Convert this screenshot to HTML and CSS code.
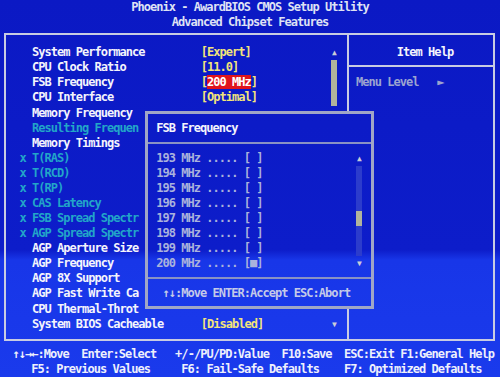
FILE: index.html
```html
<!DOCTYPE html>
<html>
<head>
  <meta charset="utf-8">
  <title>Advanced Chipset Features</title>
  <link rel="stylesheet" href="styles.css">
</head>
<body>
  <div class="title">
    <div>Phoenix - AwardBIOS CMOS Setup Utility</div>
    <div>Advanced Chipset Features</div>
  </div>

  <div class="frame">
    <div class="menu">
      <ul class="items">
        <li><span></span><span>System Performance</span><span class="value">[Expert]</span></li>
        <li><span></span><span>CPU Clock Ratio</span><span class="value">[11.0]</span></li>
        <li><span></span><span>FSB Frequency</span><span class="value">[<span class="sel">200 MHz</span>]</span></li>
        <li><span></span><span>CPU Interface</span><span class="value">[Optimal]</span></li>
        <li><span></span><span>Memory Frequency</span><span></span></li>
        <li class="off"><span></span><span>Resulting Frequen</span><span></span></li>
        <li><span></span><span>Memory Timings</span><span></span></li>
        <li class="off"><span>x</span><span>T(RAS)</span><span></span></li>
        <li class="off"><span>x</span><span>T(RCD)</span><span></span></li>
        <li class="off"><span>x</span><span>T(RP)</span><span></span></li>
        <li class="off"><span>x</span><span>CAS Latency</span><span></span></li>
        <li class="off"><span>x</span><span>FSB Spread Spectr</span><span></span></li>
        <li class="off"><span>x</span><span>AGP Spread Spectr</span><span></span></li>
        <li><span></span><span>AGP Aperture Size</span><span></span></li>
        <li><span></span><span>AGP Frequency</span><span></span></li>
        <li><span></span><span>AGP 8X Support</span><span></span></li>
        <li><span></span><span>AGP Fast Write Ca</span><span></span></li>
        <li><span></span><span>CPU Thermal-Throt</span><span></span></li>
        <li><span></span><span>System BIOS Cacheable</span><span class="value">[Disabled]</span></li>
      </ul>
      <div class="scroll">
        <span class="arrow">▲</span>
        <span class="thumb"></span>
        <span class="track"></span>
        <span class="arrow">▼</span>
      </div>
    </div>
    <div class="help">
      <div class="help-title">Item Help</div>
      <div class="rule"></div>
      <div class="help-row">Menu Level   ►</div>
    </div>
  </div>

  <div class="keys">
    <div class="keys-1">↑↓→←:Move  Enter:Select   +/-/PU/PD:Value  F10:Save  ESC:Exit F1:General Help</div>
    <div class="keys-2">F5: Previous Values     F6: Fail-Safe Defaults    F7: Optimized Defaults</div>
  </div>

  <div class="popup">
    <div class="pop-title">FSB Frequency</div>
    <div class="pop-rule"></div>
    <div class="pop-body">
      <ul class="pop-list">
        <li>193 MHz ..... [ ]</li>
        <li>194 MHz ..... [ ]</li>
        <li>195 MHz ..... [ ]</li>
        <li>196 MHz ..... [ ]</li>
        <li>197 MHz ..... [ ]</li>
        <li>198 MHz ..... [ ]</li>
        <li>199 MHz ..... [ ]</li>
        <li>200 MHz ..... [■]</li>
      </ul>
      <div class="pop-scroll">
        <span class="arrow">▲</span>
        <span class="pop-track"><span class="pop-thumb"></span></span>
        <span class="arrow">▼</span>
      </div>
    </div>
    <div class="pop-rule"></div>
    <div class="pop-keys">↑↓:Move ENTER:Accept ESC:Abort</div>
  </div>
</body>
</html>
```

FILE: styles.css
```css
body {
  margin: 0;
  width: 500px;
  height: 377px;
  overflow: hidden;
  background: linear-gradient(#0b19c4 0, #0d1dca 250px, #1836e8 260px, #1a3aec 377px) fixed;
  font-family: "DejaVu Sans Mono", monospace;
  font-weight: bold;
  font-size: 12px;
  letter-spacing: -0.97px;
  line-height: 15.08px;
  color: #f4f4fc;
}

.title {
  text-align: center;
  color: #dfe2f4;
}

.frame {
  margin: 3px 5px 0 4px;
  height: 308px;
  box-sizing: border-box;
  border: 2px solid #c8cce2;
  display: grid;
  grid-template-columns: 341px 1fr;
}

.menu {
  display: flex;
  padding-top: 10.08px;
}

.items {
  list-style: none;
  margin: 0;
  padding: 0 0 0 13.5px;
}

.items li {
  display: grid;
  grid-template-columns: 12.5px 168.75px 130.5px;
  height: 15.08px;
  white-space: pre;
}

.items li.off {
  color: #22a6c8;
}

.value {
  color: #f2e47a;
}

.sel {
  background: #e0141c;
  color: #ffffff;
}

.scroll {
  display: flex;
  flex-direction: column;
  align-items: center;
  width: 6.25px;
  height: 286.52px;
}

.arrow {
  height: 15.08px;
  font-size: 8px;
  letter-spacing: 0;
  color: #c8ccd8;
}

.thumb {
  width: 6px;
  height: 45.24px;
  background: #b2b49c;
}

.track {
  flex: 1;
}

.help {
  border-left: 2px solid #c8cce2;
  padding-top: 10.08px;
}

.help-title {
  text-align: center;
  padding-left: 8px;
}

.rule {
  height: 15.08px;
  background: linear-gradient(transparent 5.5px, #c8cce2 5.5px, #c8cce2 7.5px, transparent 7.5px);
}

.help-row {
  padding-left: 7px;
  color: #9ca4d0;
  white-space: pre;
}

.keys {
  margin-top: 5.68px;
  color: #eef0fc;
}

.keys-1 {
  padding-left: 12.5px;
  white-space: pre;
}

.keys-2 {
  padding-left: 31.25px;
  white-space: pre;
}

.popup {
  position: absolute;
  left: 145px;
  top: 111px;
  width: 229px;
  height: 198px;
  box-sizing: border-box;
  border: 3px solid #a0a6c6;
  padding-top: 6.6px;
  background: linear-gradient(#0b19c4 0, #0d1dca 250px, #1836e8 260px, #1a3aec 377px) fixed;
}

.pop-title {
  padding-left: 8.25px;
}

.pop-rule {
  height: 15.08px;
  background: linear-gradient(transparent 6px, #8a92c4 6px, #8a92c4 8px, transparent 8px);
}

.pop-body {
  display: flex;
}

.pop-list {
  list-style: none;
  margin: 0;
  padding: 0 0 0 8.25px;
  width: 200px;
  color: #aab2dc;
}

.pop-list li {
  height: 15.08px;
  white-space: pre;
}

.pop-scroll {
  display: flex;
  flex-direction: column;
  align-items: center;
  width: 6.25px;
}

.pop-track {
  display: block;
  width: 6px;
  height: 90.48px;
  padding-top: 45.24px;
  box-sizing: border-box;
  background: #2c3ccc;
}

.pop-thumb {
  display: block;
  height: 15.08px;
  background: #b2b49c;
}

.pop-keys {
  padding-left: 14.5px;
  color: #c4cae8;
  white-space: pre;
}
```
